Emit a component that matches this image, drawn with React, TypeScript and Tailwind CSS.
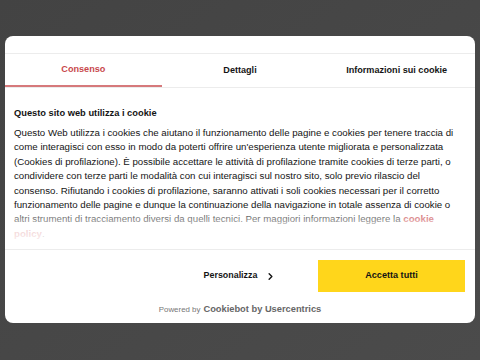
import { ChevronRight } from 'lucide-react';

const tabs = ['Consenso', 'Dettagli', 'Informazioni sui cookie'];

const lines = [
  'Questo Web utilizza i cookies che aiutano il funzionamento delle pagine e cookies per tenere traccia di',
  "come interagisci con esso in modo da poterti offrire un'esperienza utente migliorata e personalizzata",
  '(Cookies di profilazione). È possibile accettare le attività di profilazione tramite cookies di terze parti, o',
  'condividere con terze parti le modalità con cui interagisci sul nostro sito, solo previo rilascio del',
  'consenso. Rifiutando i cookies di profilazione, saranno attivati i soli cookies necessari per il corretto',
  'funzionamento delle pagine e dunque la continuazione della navigazione in totale assenza di cookie o',
];

export default function App() {
  return (
    <div
      className="w-[480px] h-[360px] bg-gradient-to-br from-[#434343] to-[#4b4b4b] pt-[36px] px-[5px] overflow-hidden"
      style={{ fontFamily: '"Liberation Sans", Arial, sans-serif' }}
    >
      <div className="bg-white rounded-[8px] h-[287px] flex flex-col overflow-hidden">
        {/* Header spacer */}
        <div className="h-[18px] border-b border-[#ececec]" />

        {/* Tabs */}
        <div className="grid grid-cols-3 h-[34px] border-b border-[#ececec]">
          {tabs.map((t, i) => (
            <div
              key={t}
              className={
                i === 0
                  ? 'flex items-center justify-center pt-[1px] text-[9.1px] font-bold text-[#c8484c] border-b-2 border-[#d6797b]'
                  : 'flex items-center justify-center pt-[1px] text-[9.1px] font-bold text-[#141414]'
              }
            >
              {t}
            </div>
          ))}
        </div>

        {/* Body */}
        <div className="relative h-[161px] overflow-hidden px-[9px] pt-[18px]">
          <h2 className="text-[9.3px] font-bold text-[#141414] leading-[14px] mb-[6px]">
            Questo sito web utilizza i cookie
          </h2>
          <div className="text-[9.7px] leading-[14.4px] text-[#141414]">
            {lines.map((l) => (
              <p key={l} className="whitespace-nowrap">
                {l}
              </p>
            ))}
            <p className="whitespace-nowrap">
              altri strumenti di tracciamento diversi da quelli tecnici. Per maggiori informazioni leggere la{' '}
              <span className="font-bold text-[#c8484c]">cookie</span>
            </p>
            <p className="whitespace-nowrap">
              <span className="font-bold text-[#c8484c]">policy</span>.
            </p>
          </div>
          <div className="absolute left-0 right-0 bottom-0 h-[42px] bg-gradient-to-b from-white/0 via-white/75 to-white" />
        </div>

        {/* Footer */}
        <div className="border-t border-[#ececec] flex-1 flex flex-col">
          <div className="flex justify-end gap-[10px] pt-[10px] pr-[10px]">
            <button className="w-[146px] h-[32px] flex items-center justify-center gap-[8px] pl-[10px] text-[8.9px] font-bold text-[#141414]">
              Personalizza
              <ChevronRight size={11} strokeWidth={3} />
            </button>
            <button className="w-[147px] h-[32px] bg-[#ffd61b] flex items-center justify-center text-[9.1px] font-bold text-[#141414]">
              Accetta tutti
            </button>
          </div>
          <div className="flex items-baseline justify-center gap-[3px] mt-[11px] text-[#777]">
            <span className="text-[7.9px]">Powered by</span>
            <span className="text-[9.3px] font-bold text-[#666]">Cookiebot by Usercentrics</span>
          </div>
        </div>
      </div>
    </div>
  );
}
